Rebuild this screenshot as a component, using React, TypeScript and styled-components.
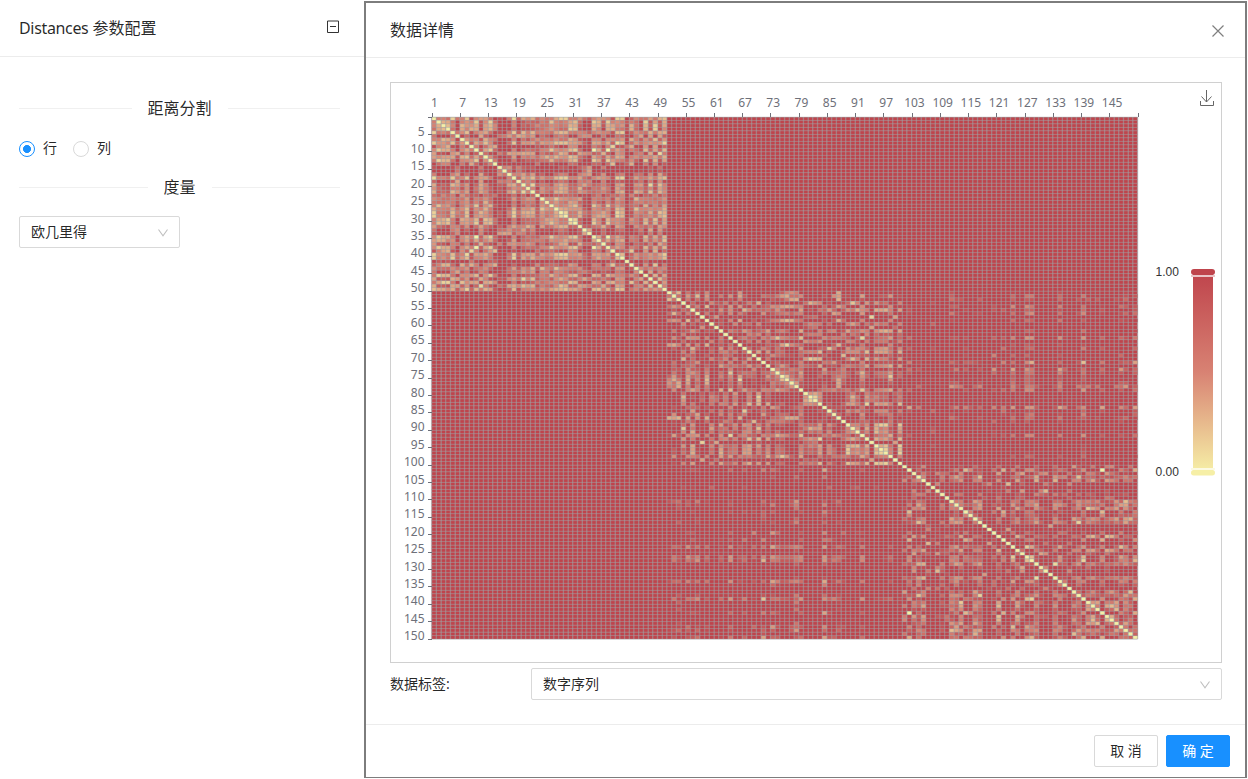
import React from "react";
import styled, { createGlobalStyle } from "styled-components";

const GlobalStyle = createGlobalStyle`
  * { box-sizing: border-box; }
  body {
    margin: 0;
    background: #fff;
    color: rgba(0, 0, 0, 0.85);
    font: 14px/22px "Noto Sans", "Noto Sans CJK SC", sans-serif;
  }
`;

/* Iris samples: sepal length, sepal width, petal length, petal width, in mm. */
const IRIS = `
51351402 49301402 47321302 46311502 50361402 54391704 46341403 50341502 44291402 49311501
54371502 48341602 48301401 43301101 58401202 57441504 54391304 51351403 57381703 51381503
54341702 51371504 46361002 51331705 48341902 50301602 50341604 52351502 52341402 47321602
48311602 54341504 52411501 55421402 49311501 50321202 55351302 49311501 44301302 51341502
50351303 45231303 44321302 50351606 51381904 48301403 51381602 46321402 53371502 50331402
70324714 64324515 69314915 55234013 65284615 57284513 63334716 49243310 66294613 52273914
50203510 59304215 60224010 61294714 56293613 67314414 56304515 58274110 62224515 56253911
59324818 61284013 63254915 61284712 64294313 66304414 68284814 67305017 60294515 57263510
55243811 55243710 58273912 60275116 54304515 60344516 67314715 63234413 56304113 55254013
55264412 61304614 58264012 50233310 56274213 57304212 57294213 62294313 51253011 57284113
63336025 58275119 71305921 63295618 65305822 76306621 49254517 73296318 67255818 72366125
65325120 64275319 68305521 57255020 58285124 64325323 65305518 77386722 77266923 60225015
69325723 56284920 77286720 63274918 67335721 72326018 62284818 61304918 64285621 72305816
74286119 79386420 64285622 63285115 61265614 77306123 63345624 64315518 60304818 69315421
67315624 69315123 58275119 68325923 67335725 67305223 63255019 65305220 62345423 59305118
`.trim().split(/\s+/).map((s) => [0, 2, 4, 6].map((i) => Number(s.slice(i, i + 2)) / 10));

const STOPS = [[246, 239, 166], [216, 130, 115], [191, 68, 76]];

function heat(value: number) {
  const t = Math.min(1, value) * 2;
  const i = t >= 1 ? 1 : 0;
  const rgb = STOPS[i].map((c, k) => Math.round(c + (STOPS[i + 1][k] - c) * (t - i)));
  return `rgb(${rgb.join(",")})`;
}

const Page = styled.div`
  display: flex;
  width: 1248px;
  height: 779px;
  overflow: hidden;
`;

const Side = styled.aside`
  width: 364px;
  flex: none;
`;

const SideHeader = styled.header`
  display: flex;
  align-items: center;
  justify-content: space-between;
  height: 57px;
  padding: 0 24px 0 19px;
  border-bottom: 1px solid #ececec;
  font-size: 16px;
  svg { display: block; margin-top: -3px; }
`;

const Latin = styled.span`
  letter-spacing: -0.34px;
`;

const SideBody = styled.div`
  padding: 39px 24px 0 19px;
`;

const Divider = styled.div`
  display: flex;
  align-items: center;
  gap: 16px;
  height: 24px;
  font-size: 16px;
  &::before, &::after {
    content: "";
    flex: 1;
    height: 1px;
    background: #f0f0f0;
  }
`;

const RadioRow = styled.div`
  display: flex;
  gap: 16px;
  padding: 17px 0 16px;
`;

const Radio = styled.label`
  display: flex;
  align-items: center;
  gap: 8px;
`;

const Dot = styled.span<{ $on?: boolean }>`
  width: 16px;
  height: 16px;
  margin-top: 2px;
  border-radius: 50%;
  border: 1px solid ${(p) => (p.$on ? "#1890ff" : "#d9d9d9")};
  background: ${(p) => (p.$on ? "radial-gradient(circle, #1890ff 3.7px, #fff 4.3px)" : "#fff")};
`;

const Select = styled.div<{ $width: number; $top?: number }>`
  display: flex;
  flex: none;
  align-items: center;
  justify-content: space-between;
  width: ${(p) => p.$width}px;
  height: 32px;
  margin-top: ${(p) => p.$top ?? 0}px;
  padding: 0 10px 0 11px;
  border: 1px solid #d9d9d9;
  border-radius: 2px;
  svg { display: block; margin-top: 2px; }
`;

const Dialog = styled.section`
  display: flex;
  flex-direction: column;
  width: 883px;
  height: 777px;
  margin-top: 1px;
  border: 2px solid #7d7d7d;
  border-bottom-width: 1px;
`;

const DialogHeader = styled.header`
  display: flex;
  align-items: center;
  justify-content: space-between;
  height: 55px;
  padding: 0 20px 0 24px;
  border-bottom: 1px solid #ececec;
  font-size: 16px;
  svg { display: block; margin-top: 2px; }
`;

const DialogBody = styled.div`
  height: 667px;
  padding: 24px 23px 0 24px;
`;

const ChartFrame = styled.div`
  width: 832px;
  height: 581px;
  border: 1px solid #d0d0d0;
  svg { display: block; }
`;

const Field = styled.div`
  display: flex;
  align-items: center;
  margin-top: 5px;
`;

const FieldLabel = styled.span`
  flex: none;
  width: 141px;
`;

const DialogFooter = styled.footer`
  display: flex;
  justify-content: flex-end;
  gap: 8px;
  flex: 1;
  padding: 10px 15px;
  border-top: 1px solid #ececec;
`;

const Button = styled.button<{ $primary?: boolean }>`
  width: 64px;
  height: 32px;
  padding: 0;
  border: 1px solid ${(p) => (p.$primary ? "#1890ff" : "#d9d9d9")};
  border-radius: 2px;
  background: ${(p) => (p.$primary ? "#1890ff" : "#fff")};
  color: ${(p) => (p.$primary ? "#fff" : "rgba(0, 0, 0, 0.85)")};
  font: inherit;
`;

const Chevron = () => (
  <svg width="12" height="12" viewBox="0 0 12 12" fill="none" stroke="#bfbfbf" strokeWidth="1.1">
    <path d="M1.5 2.5 6 8.700l4.500-6.200" />
  </svg>
);

const X0 = 40.6;
const Y0 = 34;
const W = 706;
const H = 522;
const N = 150;
const cellX = (i: number) => X0 + (i * W) / N;
const cellY = (i: number) => Y0 + (i * H) / N;
const indices = Array.from({ length: N }, (_, i) => i);
const edges = Array.from({ length: N + 1 }, (_, i) => i);
const xTicks = Array.from({ length: 25 }, (_, i) => i * 6);
const yTicks = Array.from({ length: 30 }, (_, i) => (i + 1) * 5);

const Heatmap = () => (
  <svg width="830" height="579" fontSize="12" fill="#6e7079">
    <rect x={X0} y={Y0} width={W} height={H} fill={heat(1)} />
    <g shapeRendering="crispEdges">
      {indices.map((r) =>
        indices.map((c) => {
          const d = Math.hypot(...IRIS[r].map((v, k) => v - IRIS[c][k]));
          return d >= 1 ? null : (
            <rect key={r * N + c} x={cellX(c)} y={cellY(r)} width={W / N} height={H / N} fill={heat(d)} />
          );
        })
      )}
    </g>
    <g fill="#9ea3a6">
      {edges.map((i) => (
        <React.Fragment key={i}>
          <rect x={cellX(i) - 0.75} y={Y0} width="1.5" height={H} fillOpacity="0.38" />
          <rect x={Math.round(cellX(i) - 0.5)} y={Y0} width="1" height={H} fillOpacity="0.3" />
          <rect x={X0} y={cellY(i) - 0.6} width={W} height="1.2" fillOpacity="0.28" />
          <rect x={X0} y={Math.round(cellY(i) - 0.5)} width={W} height="1" fillOpacity="0.3" />
        </React.Fragment>
      ))}
    </g>
    <g shapeRendering="crispEdges">
      {[...xTicks, N].map((i) => (
        <rect key={i} x={Math.round(cellX(i))} y={Y0 - 4} width="1" height="4" />
      ))}
      {[0, ...yTicks].map((i) => (
        <rect key={i} x={37} y={Math.round(cellY(i) - 0.5)} width="4" height="1" />
      ))}
    </g>
    {xTicks.map((i) => (
      <text key={i} x={cellX(i + 0.5) + 0.4} y={24} textAnchor="middle">{i + 1}</text>
    ))}
    {yTicks.map((i) => (
      <text key={i} x={33.5} y={Math.round(cellY(i - 0.5) + 3)} textAnchor="end">{i}</text>
    ))}
    <g fill="none" stroke="#666">
      <path d="M815.5 7v12M810.5 13.5l5 5.500 5-5.500M809.500 18v4.500h13V18" />
    </g>
    <defs>
      <linearGradient id="scale" x1="0" y1="0" x2="0" y2="1">
        <stop offset="0" stopColor="#bf444c" />
        <stop offset="0.5" stopColor="#d88273" />
        <stop offset="1" stopColor="#f6efa6" />
      </linearGradient>
    </defs>
    <rect x="802" y="189" width="20" height="200" fill="url(#scale)" />
    <rect x="800" y="186" width="24" height="6" rx="3" fill="#bf444c" />
    <rect x="800" y="192" width="24" height="2" fill="#eac5c8" />
    <rect x="800" y="385" width="24" height="2" fill="#fcfae3" />
    <rect x="800" y="387" width="24" height="5.500" rx="2.700" fill="#f6efa6" />
    <g fill="#333" fontFamily="Liberation Sans">
      <text x="764.500" y="193">1.00</text>
      <text x="764.500" y="393">0.00</text>
    </g>
  </svg>
);

export default function App() {
  return (
    <Page>
      <GlobalStyle />
      <Side>
        <SideHeader>
          <span><Latin>Distances</Latin> 参数配置</span>
          <svg width="14" height="14" fill="none" stroke="#333">
            <path d="M1.500 1h11v11.500h-11zM4 6.500h6" />
          </svg>
        </SideHeader>
        <SideBody>
          <Divider>距离分割</Divider>
          <RadioRow>
            <Radio><Dot $on />行</Radio>
            <Radio><Dot />列</Radio>
          </RadioRow>
          <Divider>度量</Divider>
          <Select $width={161} $top={17}>欧几里得<Chevron /></Select>
        </SideBody>
      </Side>
      <Dialog>
        <DialogHeader>
          数据详情
          <svg width="14" height="14" fill="none" stroke="#7f7f7f" strokeWidth="1.200">
            <path d="M1.500 1.500 12.500 12.500M12.500 1.500 1.500 12.500" />
          </svg>
        </DialogHeader>
        <DialogBody>
          <ChartFrame><Heatmap /></ChartFrame>
          <Field>
            <FieldLabel>数据标签:</FieldLabel>
            <Select $width={691}>数字序列<Chevron /></Select>
          </Field>
        </DialogBody>
        <DialogFooter>
          <Button>取 消</Button>
          <Button $primary>确 定</Button>
        </DialogFooter>
      </Dialog>
    </Page>
  );
}
